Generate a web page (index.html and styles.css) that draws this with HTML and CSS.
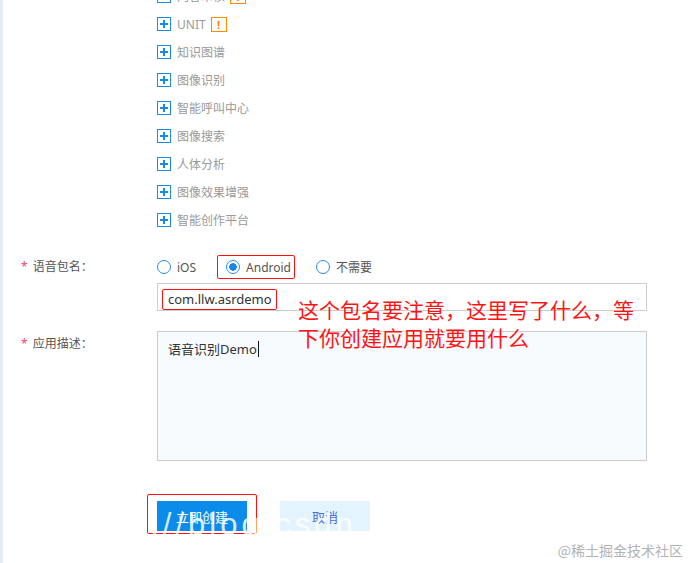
FILE: index.html
```html
<!DOCTYPE html>
<html lang="zh-CN">

<head>
    <meta charset="UTF-8">
    <meta name="viewport" content="width=device-width, initial-scale=1.0">
    <title>创建应用</title>
    <link rel="stylesheet" href="styles.css">
</head>

<body>
    <div class="page">
        <ul class="products">
            <li><span class="plus"></span>内容审核<span class="badge">!</span></li>
            <li><span class="plus"></span>UNIT<span class="badge">!</span></li>
            <li><span class="plus"></span>知识图谱</li>
            <li><span class="plus"></span>图像识别</li>
            <li><span class="plus"></span>智能呼叫中心</li>
            <li><span class="plus"></span>图像搜索</li>
            <li><span class="plus"></span>人体分析</li>
            <li><span class="plus"></span>图像效果增强</li>
            <li><span class="plus"></span>智能创作平台</li>
        </ul>

        <div class="form">
            <div class="form-row">
                <div class="form-label"><i>*</i>语音包名：</div>
                <div class="form-field">
                    <div class="radios">
                        <span class="radio"><span class="circle"></span>iOS</span>
                        <span class="radio marked checked"><span class="circle"></span>Android</span>
                        <span class="radio"><span class="circle"></span>不需要</span>
                    </div>
                    <div class="input"><span class="marked-text">com.llw.asrdemo</span></div>
                </div>
            </div>

            <div class="form-row desc-row">
                <div class="form-label label-desc"><i>*</i>应用描述：</div>
                <div class="form-field">
                    <div class="textarea">语音识别Demo<span class="caret"></span></div>
                </div>
            </div>

            <div class="actions">
                <div class="marked-btn">
                    <button class="btn btn-primary">立即创建</button>
                </div>
                <button class="btn btn-cancel">取消</button>
            </div>
        </div>

        <div class="note">这个包名要注意，这里写了什么，等<br>下你创建应用就要用什么</div>
        <div class="watermark">https://blog.csdn.net/</div>
        <div class="source">@稀土掘金技术社区</div>
    </div>
</body>

</html>
```

FILE: styles.css
```css
body {
    margin: 0;
    background-color: #fff;
    font-family: "Noto Sans", "Noto Sans CJK SC", sans-serif;
}

.page {
    position: relative;
    height: 563px;
    overflow: hidden;
    border-left: 3px solid #e6ecf3;
}

/* product list */

.products {
    list-style: none;
    margin: -18px 0 0 0;
    padding: 0 0 0 154px;
}

.products li {
    display: flex;
    align-items: center;
    height: 28px;
    font-size: 12px;
    color: #999;
}

.plus {
    width: 14px;
    height: 14px;
    box-sizing: border-box;
    border: 1px solid #1a8ae6;
    margin-right: 6px;
    background:
        linear-gradient(#1a8ae6, #1a8ae6) center / 8px 2px no-repeat,
        linear-gradient(#1a8ae6, #1a8ae6) center / 2px 8px no-repeat;
}

.badge {
    width: 16px;
    height: 15px;
    box-sizing: border-box;
    margin-left: 5px;
    border: 1px solid #ff8a00;
    color: #ff7a00;
    font-size: 11px;
    font-weight: bold;
    line-height: 13px;
    text-align: center;
}

/* form */

.form {
    margin-top: 19px;
    padding-left: 18px;
}

.form-row {
    display: flex;
    align-items: flex-start;
}

.form-label {
    width: 136px;
    line-height: 28px;
    font-size: 12px;
    color: #555;
}

.form-label i {
    font-style: normal;
    color: #f0466a;
    margin-right: 5px;
}

.label-desc {
    line-height: 26px;
}

.form-field {
    width: 490px;
}

.radios {
    display: flex;
    align-items: center;
    height: 28px;
    font-size: 12px;
    color: #555;
}

.radio {
    display: flex;
    align-items: center;
    margin-right: 21px;
}

.circle {
    width: 14px;
    height: 14px;
    box-sizing: border-box;
    border: 1px solid #2b8be6;
    border-radius: 50%;
    margin-right: 6px;
}

.checked .circle {
    background: radial-gradient(circle, #1a86e3 3.5px, transparent 4px);
}

.marked {
    height: 24px;
    box-sizing: border-box;
    padding: 0 3px 0 8px;
    border: 1px solid #f11;
    border-radius: 2px;
    margin-right: 21px;
}

.input {
    margin-top: 2px;
    height: 28px;
    box-sizing: border-box;
    border: 1px solid #ccc;
    padding: 5px 0 0 4px;
}

.marked-text {
    display: block;
    width: 115px;
    height: 21px;
    box-sizing: border-box;
    padding-left: 5px;
    border: 1px solid #f11;
    border-radius: 2px;
    font-size: 13px;
    line-height: 18px;
    color: #333;
}

.desc-row {
    margin-top: 20px;
}

.textarea {
    height: 130px;
    box-sizing: border-box;
    border: 1px solid #ccc;
    background-color: #f7fbfe;
    padding: 8px 10px;
    font-size: 13px;
    line-height: 18px;
    color: #333;
}

.caret {
    display: inline-block;
    width: 1px;
    height: 16px;
    margin-left: 1px;
    vertical-align: -3px;
    background-color: #111;
}

/* buttons */

.actions {
    display: flex;
    align-items: flex-start;
    margin-top: 33px;
    margin-left: 126px;
}

.marked-btn {
    padding: 6px 9px 2px 9px;
    border: 1px solid #f11;
    border-radius: 2px;
}

.btn {
    width: 90px;
    height: 30px;
    border: none;
    font-family: inherit;
    font-size: 13px;
    cursor: pointer;
}

.btn-primary {
    display: block;
    background-color: #0b8ceb;
    color: #fff;
}

.btn-cancel {
    margin: 7px 0 0 23px;
    background-color: #e4f4ff;
    color: #4a6fd4;
}

/* overlays */

.note {
    position: absolute;
    left: 295px;
    top: 295px;
    font-family: "Noto Sans CJK SC", sans-serif;
    font-size: 21px;
    line-height: 28px;
    color: #ff1414;
}

.watermark {
    position: absolute;
    left: 60px;
    top: 509px;
    font-family: "Liberation Sans", sans-serif;
    font-size: 31px;
    line-height: 31px;
    letter-spacing: 4px;
    color: rgba(255, 255, 255, 0.85);
    white-space: nowrap;
    pointer-events: none;
}

.source {
    position: absolute;
    right: 5px;
    top: 541px;
    font-family: "Noto Sans CJK SC", sans-serif;
    font-size: 14px;
    line-height: 18px;
    color: #b3b3b3;
}
```
